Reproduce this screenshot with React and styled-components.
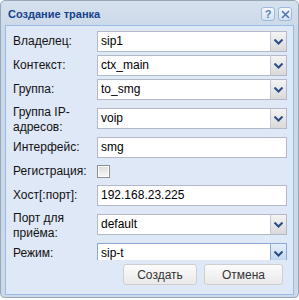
import React from 'react'
import styled, { createGlobalStyle, css } from 'styled-components'

const Global = createGlobalStyle`
  html, body {
    margin: 0;
    padding: 0;
    background: #ffffff;
  }
  body {
    font-family: "Liberation Sans", Arial, sans-serif;
    font-size: 12px;
    color: #000;
  }
`

const Window = styled.div`
  box-sizing: border-box;
  width: 299px;
  height: 298px;
  border: 1px solid #99a7ba;
  border-radius: 5px;
  background: linear-gradient(#d6e1ee, #cbd8e8 30px, #cdd9e9);
  padding: 0 4px 2px 4px;
  display: flex;
  flex-direction: column;
  box-shadow: 0 1px 1px rgba(0, 0, 0, 0.18);
`

const Header = styled.div`
  height: 24px;
  display: flex;
  align-items: center;
  padding: 0 2px 0 3px;
`

const Title = styled.div`
  flex: 1;
  font-size: 11px;
  font-weight: bold;
  color: #15428b;
  padding-top: 1px;
`

const Tools = styled.div`
  display: flex;
  gap: 3px;
  margin-top: 2px;
`

const Tool = styled.div`
  box-sizing: border-box;
  width: 14px;
  height: 14px;
  border: 1px solid #9fb9dc;
  border-radius: 3px;
  background: linear-gradient(#f4f8fd, #d4e2f3);
  display: flex;
  align-items: center;
  justify-content: center;
  color: #5b7fb4;
  font-size: 11px;
  font-weight: bold;
  line-height: 1;
`

const Body = styled.div`
  flex: 1;
  border: 1px solid #99bbe8;
  background: #dfe8f6;
  display: flex;
  flex-direction: column;
  min-height: 0;
`

const Form = styled.div`
  height: 234px;
  overflow: hidden;
  padding: 5px 6px 0 7px;
  box-sizing: border-box;
  display: flex;
  flex-direction: column;
  gap: 3px;
`

const Row = styled.div`
  display: flex;
  align-items: center;
  height: ${p => (p.$tall ? 31 : 21)}px;
  flex-shrink: 0;
`

const Label = styled.div`
  width: 84px;
  flex-shrink: 0;
  font-size: 12px;
  line-height: 15px;
  color: #111;
  padding-top: ${p => (p.$tall ? 2 : 0)}px;
`

const Field = styled.div`
  flex: 1;
  box-sizing: border-box;
  height: 21px;
  display: flex;
  border: 1px solid ${p => (p.$focus ? '#8aa8d2' : '#b5b8c8')};
  background: #fff;
`

const Value = styled.div`
  flex: 1;
  padding: 0 3px;
  line-height: 19px;
  font-size: 12px;
  color: #000;
  white-space: nowrap;
  overflow: hidden;
`

const Trigger = styled.div`
  width: 17px;
  margin: -1px -1px -1px 0;
  box-sizing: border-box;
  border: 1px solid #b5b8c8;
  border-left-color: #c5c8d4;
  background: linear-gradient(#f4f4f4, #d9d9d9);
  display: flex;
  align-items: center;
  justify-content: center;
  ${p =>
    p.$focus &&
    css`
      border-color: #8aa8d2;
      background: linear-gradient(#e6effa, #bcd2ee);
    `}
`

const Check = styled.div`
  box-sizing: border-box;
  width: 13px;
  height: 13px;
  border: 1px solid #8e8f8f;
  background: linear-gradient(#dcdcdc, #f7f7f7);
  box-shadow: inset 0 0 0 1px #fff;
`

const Buttons = styled.div`
  display: flex;
  justify-content: flex-end;
  gap: 7px;
  padding: 4px 10px 0 0;
`

const Button = styled.div`
  box-sizing: border-box;
  width: ${p => p.$w}px;
  height: 21px;
  border: 1px solid #cfcfcf;
  border-radius: 3px;
  background: linear-gradient(#fcfcfc, #e9e9e9);
  display: flex;
  align-items: center;
  justify-content: center;
  font-size: 12px;
  color: #333;
`

const Chevron = () => (
  <svg width="9" height="6" viewBox="0 0 9 6">
    <path d="M0.5 0.5 L4.5 4.5 L8.5 0.5" fill="none" stroke="#2b4d86" strokeWidth="2" />
  </svg>
)

const Select = ({ value, focus }) => (
  <Field $focus={focus}>
    <Value>{value}</Value>
    <Trigger $focus={focus}>
      <Chevron />
    </Trigger>
  </Field>
)

const rows = [
  { label: 'Владелец:', type: 'select', value: 'sip1' },
  { label: 'Контекст:', type: 'select', value: 'ctx_main' },
  { label: 'Группа:', type: 'select', value: 'to_smg' },
  { label: 'Группа IP-адресов:', type: 'select', value: 'voip', tall: true },
  { label: 'Интерфейс:', type: 'text', value: 'smg' },
  { label: 'Регистрация:', type: 'check' },
  { label: 'Хост[:порт]:', type: 'text', value: '192.168.23.225' },
  { label: 'Порт для приёма:', type: 'select', value: 'default', tall: true },
  { label: 'Режим:', type: 'select', value: 'sip-t', focus: true },
]

export default function App() {
  return (
    <>
      <Global />
      <Window>
        <Header>
          <Title>Создание транка</Title>
          <Tools>
            <Tool>?</Tool>
            <Tool>
              <svg width="9" height="9" viewBox="0 0 9 9">
                <path d="M1 1 L8 8 M8 1 L1 8" stroke="#4f74ab" strokeWidth="1.5" />
              </svg>
            </Tool>
          </Tools>
        </Header>
        <Body>
          <Form>
            {rows.map(r => (
              <Row key={r.label} $tall={r.tall}>
                <Label $tall={r.tall}>{r.label}</Label>
                {r.type === 'select' && <Select value={r.value} focus={r.focus} />}
                {r.type === 'text' && (
                  <Field>
                    <Value>{r.value}</Value>
                  </Field>
                )}
                {r.type === 'check' && <Check />}
              </Row>
            ))}
          </Form>
          <Buttons>
            <Button $w={74}>Создать</Button>
            <Button $w={79}>Отмена</Button>
          </Buttons>
        </Body>
      </Window>
    </>
  )
}
